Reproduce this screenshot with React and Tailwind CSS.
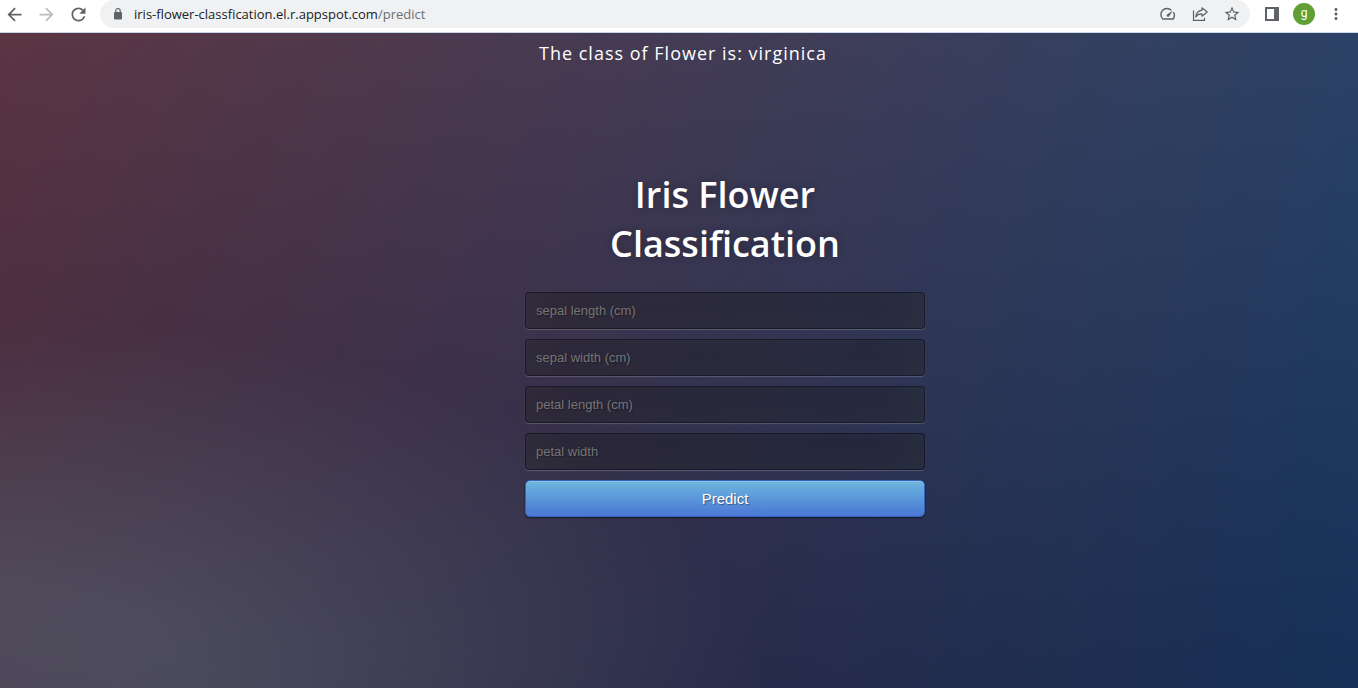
import React from "react";
import { MdArrowBack, MdArrowForward, MdRefresh, MdStarBorder, MdMoreVert } from "react-icons/md";

const FIELDS = [
  { id: "sepal-length", label: "sepal length (cm)" },
  { id: "sepal-width", label: "sepal width (cm)" },
  { id: "petal-length", label: "petal length (cm)" },
  { id: "petal-width", label: "petal width" },
];

function IconButton({ label, children, className = "text-[#5f6368]" }) {
  return (
    <button type="button" aria-label={label} className={`flex h-7 w-7 shrink-0 items-center justify-center ${className}`}>
      {children}
    </button>
  );
}

function LockIcon() {
  return (
    <svg width="14" height="14" viewBox="0 0 14 14" className="mr-[9px] shrink-0 text-[#5f6368]" aria-hidden="true">
      <rect x="3" y="5" width="8" height="7.500" rx="1" fill="currentColor" />
      <path d="M4.800 5.500V3.700a2.200 2.200 0 0 1 4.400 0V5.500" fill="none" stroke="currentColor" strokeWidth="1.200" />
    </svg>
  );
}

function GaugeIcon() {
  return (
    <svg width="16" height="16" viewBox="0 0 16 16" fill="none" stroke="currentColor" strokeWidth="1.400" strokeLinejoin="round">
      <path d="M13.300 6.200A6 6 0 0 1 13.200 13H2.800A6 6 0 0 1 11.300 4.200" />
      <path d="M12.600 4.800 9.200 10.200A1.400 1.400 0 0 1 7 8.400Z" fill="currentColor" stroke="none" />
    </svg>
  );
}

function ShareIcon() {
  return (
    <svg width="16" height="16" viewBox="0 0 16 16" fill="none" stroke="currentColor" strokeWidth="1.200" strokeLinejoin="round">
      <path d="M1.500 4.500V14.400H12.500V11.800" />
      <path d="M10 1.800 15.200 6 10 10.200V7.900C7 7.800 5.200 8.800 3.700 11C4.200 7.500 6.200 4.700 10 4.200Z" />
    </svg>
  );
}

function SidePanelIcon() {
  return (
    <svg width="14" height="14" viewBox="0 0 14 14" fill="currentColor">
      <path fillRule="evenodd" d="M0 0H14V14H0ZM2 2V12H9V2Z" />
    </svg>
  );
}

function BrowserBar() {
  return (
    <header className="flex items-start gap-2 border-b border-[#c9d6ea] bg-white pr-2 pb-1 font-['Open_Sans',sans-serif]">
      <nav aria-label="Browser navigation" className="flex gap-1">
        <IconButton label="Back"><MdArrowBack size={21} /></IconButton>
        <IconButton label="Forward" className="text-[#babcbe]"><MdArrowForward size={21} /></IconButton>
        <IconButton label="Reload"><MdRefresh size={21} /></IconButton>
      </nav>
      <div className="flex h-7 min-w-0 flex-1 items-center rounded-full bg-[#eff1f3] pr-1 pl-[11px]">
        <LockIcon />
        <div role="textbox" aria-label="Address" tabIndex={0} className="min-w-0 flex-1 truncate text-[13px] leading-5 text-[#202124]">
          iris-flower-classfication.el.r.appspot.com<span className="text-[#6b6f73]">/predict</span>
        </div>
        <div className="flex gap-1">
          <IconButton label="Performance"><GaugeIcon /></IconButton>
          <IconButton label="Share"><ShareIcon /></IconButton>
          <IconButton label="Bookmark this page"><MdStarBorder size={18} /></IconButton>
        </div>
      </div>
      <div className="flex gap-1">
        <IconButton label="Side panel"><SidePanelIcon /></IconButton>
        <IconButton label="Profile">
          <span className="flex h-[22px] w-[22px] items-center justify-center rounded-full bg-[#5f9f35] pb-0.5 font-['Roboto',sans-serif] text-[12px] leading-4 text-white">g</span>
        </IconButton>
        <IconButton label="Menu"><MdMoreVert size={18} /></IconButton>
      </div>
    </header>
  );
}

export default function App() {
  return (
    <div className="flex min-h-screen flex-col">
      <BrowserBar />
      <main className="flex-1 bg-[#092756] bg-[image:-webkit-radial-gradient(0%_100%,ellipse_farthest-corner,rgba(104,128,138,0.4)_10%,rgba(138,114,76,0)_40%),linear-gradient(to_bottom,rgba(57,173,219,0.25)_0%,rgba(42,60,87,0.4)_100%),linear-gradient(135deg,#670d10_0%,#092756_100%)] pt-2 pb-10 font-['Open_Sans',sans-serif] text-white">
        <p className="pl-2 text-center text-[18px] leading-[25px] tracking-[1px]">The class of Flower is: virginica</p>
        <div className="mt-[104px] flex justify-center pl-[92px]">
          <form className="w-full max-w-[400px]" onSubmit={(e) => e.preventDefault()}>
            <h1 className="mb-6 text-center text-[36px] leading-[49px] font-semibold [text-shadow:0_0_10px_rgba(0,0,0,0.3)]">
              Iris Flower Classification
            </h1>
            <div className="flex flex-col gap-[10px] font-['Liberation_Sans',sans-serif]">
              {FIELDS.map((f) => (
                <input
                  key={f.id}
                  id={f.id}
                  name={f.id}
                  type="text"
                  aria-label={f.label}
                  placeholder={f.label}
                  className="h-[37px] w-full rounded border border-black/30 bg-black/30 px-[10px] text-[13px] text-white shadow-[inset_0_-5px_45px_rgba(100,100,100,0.2),0_1px_1px_rgba(255,255,255,0.2)] outline-none [text-shadow:1px_1px_1px_rgba(0,0,0,0.3)] placeholder:text-[#757575]"
                />
              ))}
              <button
                type="submit"
                className="h-[37px] w-full rounded-[5px] border border-[#3762bc] bg-linear-to-b from-[#6eb6de] to-[#4a77d4] text-[15px] leading-5 text-white shadow-[inset_0_1px_0_rgba(255,255,255,0.2),0_1px_2px_rgba(0,0,0,0.5)] [text-shadow:1px_1px_1px_rgba(0,0,0,0.4)]"
              >
                Predict
              </button>
            </div>
          </form>
        </div>
      </main>
    </div>
  );
}
